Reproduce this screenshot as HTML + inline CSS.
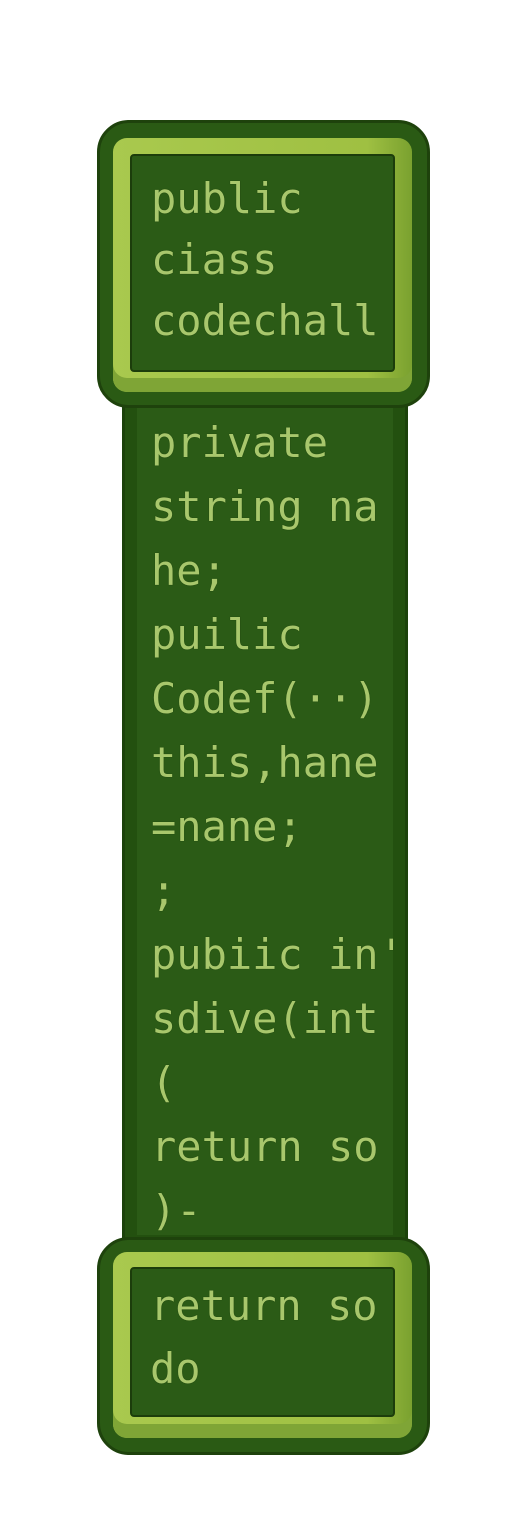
<!DOCTYPE html>
<html><head><style>
body{margin:0;width:512px;height:1536px;background:#fff;position:relative;overflow:hidden;font-family:"DejaVu Sans Mono","Liberation Mono",monospace}
.a{position:absolute}
.cap{background:#2a5a14;border:3px solid #1e420c;border-radius:32px;box-sizing:border-box}
.frame{background:linear-gradient(90deg,#a9c94e,#9fc042 85%,#7aa12f);border-radius:14px;box-shadow:inset 0 -14px 0 #7fa536}
.panel{background:#2b5b16;border:2px solid #1c3d0b;border-radius:4px;box-sizing:border-box}
.t{position:absolute;left:151px;color:#a8c76c;font-size:42px;line-height:64px;white-space:pre;text-shadow:0 0 1px #1a3a08}
</style></head><body>
<div class="a" style="left:122px;top:395px;width:286px;height:850px;background:#23500f;border-left:3px solid #1c420b;border-right:3px solid #1c420b;box-sizing:border-box"></div>
<div class="a" style="left:137px;top:405px;width:256px;height:830px;background:#2b5b16"></div>
<div class="a cap" style="left:97px;top:120px;width:333px;height:288px"></div>
<div class="a frame" style="left:113px;top:138px;width:299px;height:254px"></div>
<div class="a panel" style="left:130px;top:154px;width:265px;height:218px"></div>
<div class="a cap" style="left:97px;top:1237px;width:333px;height:218px"></div>
<div class="a frame" style="left:113px;top:1252px;width:299px;height:186px"></div>
<div class="a panel" style="left:130px;top:1267px;width:265px;height:150px"></div>
<div class="t" style="top:168px;line-height:61px">public
ciass
codechall</div>
<div class="t" style="top:411px">private
string na
he;
puilic
Codef(··)
this,hane
=nane;
;
pubiic in'
sdive(int
(
return so
)-</div>
<div class="t" style="top:1274px;left:150px;line-height:63px">return so
do</div>
</body></html>
